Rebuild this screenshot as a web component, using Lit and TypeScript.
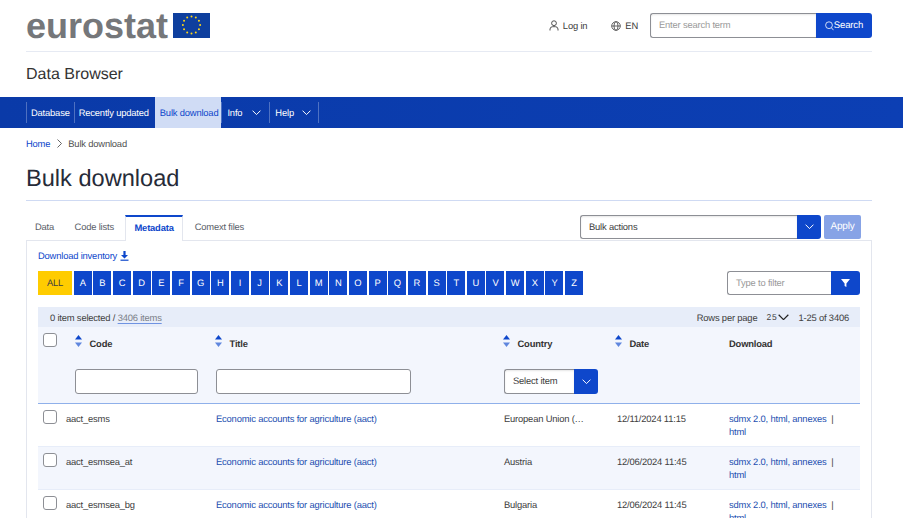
import { LitElement, html, css, svg } from "lit";
import { customElement } from "lit/decorators.js";

const LETTERS = "ABCDEFGHIJKLMNOPQRSTUVWXYZ".split("");

const ROWS = [
  { code: "aact_esms", country: "European Union (…", date: "12/11/2024 11:15" },
  { code: "aact_esmsea_at", country: "Austria", date: "12/06/2024 11:45" },
  { code: "aact_esmsea_bg", country: "Bulgaria", date: "12/06/2024 11:45" },
];

const chevron = (color = "#fff", w = 10) => svg`
  <svg width=${w} height=${w * 0.6} viewBox="0 0 10 6" fill="none" stroke=${color} stroke-width="1.1">
    <path d="M.6.7 5 5.1 9.4.7" />
  </svg>`;

const sortIcon = () => svg`
  <svg class="sort" width="7" height="12" viewBox="0 0 7 12">
    <path d="M3.5 0 7 4.6H0z" fill="#0e47cb" />
    <path d="M3.5 12 0 7.4h7z" fill="#5f86de" />
  </svg>`;

const flag = () => {
  const stars = [];
  for (let i = 0; i < 12; i++) {
    const a = (i * Math.PI) / 6;
    stars.push(svg`<circle cx=${18.5 + 8.6 * Math.cos(a)} cy=${12 + 8.6 * Math.sin(a)} r="1" fill="#ffd617" />`);
  }
  return svg`
    <svg class="flag" width="37" height="25" viewBox="0 0 37 25">
      <rect width="37" height="25" fill="#0e3f9e" />
      ${stars}
    </svg>`;
};

@customElement("app-root")
export class AppRoot extends LitElement {
  static styles = css`
    :host {
      display: block;
      height: 518px;
      overflow: hidden;
      background: #fff;
      font-family: "Liberation Sans", Arial, sans-serif;
      font-size: 9.4px;
      letter-spacing: -0.18px;
      text-rendering: geometricPrecision;
      color: #404040;
    }
    a {
      color: #0e47cb;
      text-decoration: none;
    }

    .wrap {
      margin: 0 31px 0 26px;
    }

    .top {
      height: 51px;
      display: flex;
      align-items: flex-start;
      border-bottom: 1px solid #e6eaf3;
    }
    .logo {
      font-size: 36px;
      line-height: 41px;
      height: 41px;
      margin-top: 5px;
      font-weight: 700;
      letter-spacing: 0;
      color: #75777a;
    }
    .flag {
      margin: 13px 0 0 5px;
    }
    .top-links {
      margin-left: auto;
      display: flex;
      align-items: center;
      height: 25px;
      margin-top: 13px;
    }
    .top-link {
      display: flex;
      align-items: center;
      gap: 4px;
      color: #404040;
    }
    .login {
      margin-right: 24px;
    }
    .lang {
      margin-right: 12px;
    }
    .search {
      display: flex;
      width: 222px;
      height: 25px;
    }
    .search-input {
      flex: 1;
      box-sizing: border-box;
      border: 1px solid #8d8f95;
      border-right: 0;
      border-radius: 3px 0 0 3px;
      padding-left: 8px;
      line-height: 22px;
      color: #9a9a9a;
      box-shadow: inset 0 1px 2px rgba(0, 0, 0, 0.1);
    }
    .search-btn {
      width: 56px;
      background: #0e47cb;
      color: #fff;
      border-radius: 0 3px 3px 0;
      display: flex;
      align-items: center;
      justify-content: center;
      gap: 0;
      font-size: 9.6px;
    }

    .site-name {
      height: 45px;
      box-sizing: border-box;
      padding-top: 13px;
      font-size: 16px;
      line-height: 19px;
      letter-spacing: 0;
      color: #333;
    }

    nav {
      height: 31px;
      padding-left: 26px;
      background: linear-gradient(90deg, #0a3aa8, #0c3fb4);
      display: flex;
      color: #fff;
    }
    .nav-item {
      display: flex;
      align-items: center;
      position: relative;
      padding: 0 4px;
      border-left: 1px solid transparent;
    }
    .nav-item::before {
      content: "";
      position: absolute;
      left: -1px;
      top: 5px;
      bottom: 5px;
      width: 1px;
      background: rgba(255, 255, 255, 0.28);
    }
    .nav-item.active {
      background: #d0dcf5;
      color: #0e47cb;
      margin-left: 2px;
      padding-right: 3px;
    }
    .nav-item.active::before {
      display: none;
    }
    .nav-item.menu {
      padding: 0 8px 0 5px;
      gap: 10px;
    }
    .nav-item.menu.last {
      padding-right: 7px;
      gap: 8px;
    }
    .nav-end {
      width: 1px;
      margin-top: 5px;
      height: 21px;
      background: rgba(255, 255, 255, 0.28);
    }

    .crumbs {
      height: 31px;
      display: flex;
      align-items: center;
      gap: 6.5px;
    }
    .crumbs span {
      color: #505050;
    }

    h1 {
      margin: 0;
      height: 42px;
      box-sizing: border-box;
      padding-top: 6px;
      font-size: 23.6px;
      line-height: 29px;
      letter-spacing: 0;
      font-weight: 400;
      color: #262b38;
      border-bottom: 1px solid #cfdaf3;
    }

    .tabbar {
      display: flex;
      align-items: flex-end;
      height: 25px;
      margin-top: 14px;
    }
    .tab {
      height: 25px;
      box-sizing: border-box;
      padding: 0 8.5px 0 9px;
      line-height: 24px;
      color: #5a5e68;
      margin-right: 3px;
      white-space: nowrap;
    }
    .tab.active {
      padding: 0 8px;
      border-top: 2px solid #0e47cb;
      border-left: 1px solid #e3e6ee;
      border-right: 1px solid #e3e6ee;
      line-height: 21px;
      background: #fff;
      color: #0e47cb;
      font-weight: 700;
      height: 26px;
      position: relative;
      z-index: 1;
      margin-bottom: -1px;
    }
    .bulk {
      margin-left: auto;
      display: flex;
      gap: 3px;
      margin-right: 11px;
      margin-bottom: 1px;
    }
    .bulk-select {
      display: flex;
      width: 241px;
      height: 24px;
    }
    .select-label {
      flex: 1;
      box-sizing: border-box;
      border: 1px solid #8d8f95;
      border-right: 0;
      border-radius: 3px 0 0 3px;
      padding-left: 8px;
      line-height: 21px;
      color: #404040;
      box-shadow: inset 0 1px 2px rgba(0, 0, 0, 0.1);
    }
    .select-btn {
      width: 24px;
      background: #0e47cb;
      border-radius: 0 3px 3px 0;
      display: flex;
      align-items: center;
      justify-content: center;
    }
    .apply {
      width: 37px;
      height: 24px;
      background: #87a3e6;
      color: #fff;
      border-radius: 2px;
      text-align: center;
      line-height: 23px;
      font-size: 10px;
    }

    .panel {
      border: 1px solid #e3e6ee;
      border-bottom: 0;
      padding: 0 11px;
      height: 300px;
    }
    .inventory {
      height: 30px;
      display: flex;
      align-items: center;
      gap: 3px;
      box-sizing: border-box;
      padding-bottom: 1px;
    }
    .filters {
      display: flex;
      align-items: center;
      height: 24px;
    }
    .all {
      width: 34px;
      height: 24px;
      background: #ffcc00;
      text-align: center;
      line-height: 24px;
      margin-right: 1.7px;
      color: #404040;
    }
    .letters {
      display: flex;
      gap: 1.66px;
    }
    .letter {
      width: 18px;
      height: 24px;
      background: #0e47cb;
      color: #fff;
      text-align: center;
      line-height: 24px;
    }
    .type-filter {
      margin-left: auto;
      display: flex;
      width: 133px;
      height: 24px;
    }
    .type-input {
      flex: 1;
      box-sizing: border-box;
      border: 1px solid #8d8f95;
      border-right: 0;
      border-radius: 3px 0 0 3px;
      padding-left: 8px;
      line-height: 22px;
      color: #9a9a9a;
    }
    .type-btn {
      width: 29px;
      background: #0e47cb;
      border-radius: 0 3px 3px 0;
      display: flex;
      align-items: center;
      justify-content: center;
    }

    .status {
      margin-top: 12px;
      height: 20px;
      background: #e7edf9;
      display: flex;
      align-items: center;
      padding: 0 11px 0 12px;
    }
    .status u {
      color: #7b7f88;
      text-decoration-color: #6f93e2;
      text-underline-offset: 2px;
    }
    .paging {
      margin-left: auto;
      display: flex;
      align-items: center;
    }
    .size {
      margin: 0 10px 0 9px;
      display: flex;
      align-items: center;
      letter-spacing: 0.8px;
      gap: 0;
      font-size: 8.5px;
    }

    .grid {
      display: grid;
      grid-template-columns: 28px 150px 288px 113px 112px 1fr;
    }
    .head {
      height: 76px;
      background: #f3f6fd;
      border-bottom: 1px solid #8fb0ea;
    }
    .box {
      display: block;
      width: 14px;
      height: 14px;
      box-sizing: border-box;
      border: 1px solid #8d8f95;
      border-radius: 3px;
      background: #fff;
      margin-left: 5px;
    }
    .head .box {
      margin-top: 6px;
    }
    .head-cell {
      display: flex;
      flex-direction: column;
    }
    .head-title {
      height: 30px;
      display: flex;
      align-items: center;
      gap: 7.5px;
      font-weight: 700;
      color: #333;
      box-sizing: border-box;
      padding-top: 2px;
    }
    .sort {
      margin: -4px 0 0 -1px;
    }
    .date-col .sort {
      margin-left: -2px;
    }
    .code-col .head-title {
      padding-left: 10px;
      gap: 7.5px;
    }
    .field {
      margin-top: 12px;
      height: 25px;
      box-sizing: border-box;
      border: 1px solid #8d8f95;
      border-radius: 3px;
      background: #fff;
    }
    .code-col .field {
      width: 123px;
      margin-left: 9px;
    }
    .title-col .field {
      width: 195px;
    }
    .country-select {
      margin-top: 12px;
      display: flex;
      width: 94px;
      height: 25px;
    }
    .country-select .select-label {
      padding-left: 8px;
      background: #fff;
    }

    .row {
      height: 43px;
      box-sizing: border-box;
      border-bottom: 1px solid #e7edf9;
      padding-top: 8px;
      line-height: 13px;
    }
    .row.odd {
      background: #f3f6fd;
    }
    .row .box {
      margin-top: -2px;
    }
    .link {
      color: #1d4fb0;
    }
  `;

  render() {
    return html`
      <div class="wrap">
        <div class="top">
          <div class="logo">eurostat</div>
          ${flag()}
          <div class="top-links">
            <div class="top-link login">
              <svg width="10" height="11" viewBox="0 0 10 11" fill="none" stroke="#404040" stroke-width="0.9">
                <circle cx="5" cy="3.2" r="2.4" />
                <path d="M1 10.5V9a2.6 2.6 0 0 1 2.6-2.3h2.8A2.6 2.6 0 0 1 9 9v1.5" />
              </svg>
              Log in
            </div>
            <div class="top-link lang">
              <svg width="10" height="10" viewBox="0 0 10 10" fill="none" stroke="#404040" stroke-width="0.8">
                <circle cx="5" cy="5" r="4.3" />
                <ellipse cx="5" cy="5" rx="2" ry="4.3" />
                <path d="M.7 5h8.6" />
              </svg>
              EN
            </div>
            <div class="search">
              <div class="search-input">Enter search term</div>
              <div class="search-btn">
                <svg width="9" height="10" viewBox="0 0 9 10" fill="none" stroke="#fff" stroke-width="0.8">
                  <circle cx="4" cy="4.2" r="3.4" />
                  <path d="m6.5 6.8 2 2.4" />
                </svg>
                Search
              </div>
            </div>
          </div>
        </div>
        <div class="site-name">Data Browser</div>
      </div>

      <nav>
        <div class="nav-item">Database</div>
        <div class="nav-item">Recently updated</div>
        <div class="nav-item active">Bulk download</div>
        <div class="nav-item menu">Info ${chevron("#fff", 9)}</div>
        <div class="nav-item menu last">Help ${chevron("#fff", 9)}</div>
        <div class="nav-end"></div>
      </nav>

      <div class="wrap">
        <div class="crumbs">
          <a href="#">Home</a>
          <svg width="5" height="9" viewBox="0 0 5 9" fill="none" stroke="#555" stroke-width="0.9">
            <path d="m.5.5 4 4-4 4" />
          </svg>
          <span>Bulk download</span>
        </div>
        <h1>Bulk download</h1>

        <div class="tabbar">
          <div class="tab">Data</div>
          <div class="tab">Code lists</div>
          <div class="tab active">Metadata</div>
          <div class="tab">Comext files</div>
          <div class="bulk">
            <div class="bulk-select">
              <div class="select-label">Bulk actions</div>
              <div class="select-btn">${chevron("#fff", 9)}</div>
            </div>
            <div class="apply">Apply</div>
          </div>
        </div>

        <div class="panel">
          <div class="inventory">
            <a href="#">Download inventory</a>
            <svg width="9" height="10" viewBox="0 0 9 10" fill="#0e47cb">
              <path d="M3.4 0h2.2v4H8L4.5 7.4 1 4h2.4z" />
              <rect x="0.5" y="8.6" width="8" height="1.2" />
            </svg>
          </div>

          <div class="filters">
            <div class="all">ALL</div>
            <div class="letters">
              ${LETTERS.map((l) => html`<div class="letter">${l}</div>`)}
            </div>
            <div class="type-filter">
              <div class="type-input">Type to filter</div>
              <div class="type-btn">
                <svg width="9" height="8" viewBox="0 0 9 8" fill="#fff">
                  <path d="M0 0h9L5.4 4.4V8L3.6 7V4.4z" />
                </svg>
              </div>
            </div>
          </div>

          <div class="status">
            <span>0 item selected / <u>3406 items</u></span>
            <div class="paging">
              <span>Rows per page</span>
              <span class="size">25${chevron("#222", 11)}</span>
              <span>1-25 of 3406</span>
            </div>
          </div>

          <div class="grid head">
            <div><span class="box"></span></div>
            <div class="head-cell code-col">
              <div class="head-title">${sortIcon()} Code</div>
              <div class="field"></div>
            </div>
            <div class="head-cell title-col">
              <div class="head-title">${sortIcon()} Title</div>
              <div class="field"></div>
            </div>
            <div class="head-cell">
              <div class="head-title">${sortIcon()} Country</div>
              <div class="country-select">
                <div class="select-label">Select item</div>
                <div class="select-btn">${chevron("#fff", 9)}</div>
              </div>
            </div>
            <div class="head-cell date-col">
              <div class="head-title">${sortIcon()} Date</div>
            </div>
            <div class="head-cell">
              <div class="head-title">Download</div>
            </div>
          </div>

          ${ROWS.map(
            (r, i) => html`
              <div class="grid row ${i % 2 ? "odd" : ""}">
                <div><span class="box"></span></div>
                <div>${r.code}</div>
                <div class="link">Economic accounts for agriculture (aact)</div>
                <div>${r.country}</div>
                <div>${r.date}</div>
                <div><span class="link">sdmx 2.0, html, annexes</span> &nbsp;|<br /><span class="link">html</span></div>
              </div>
            `
          )}
        </div>
      </div>
    `;
  }
}
